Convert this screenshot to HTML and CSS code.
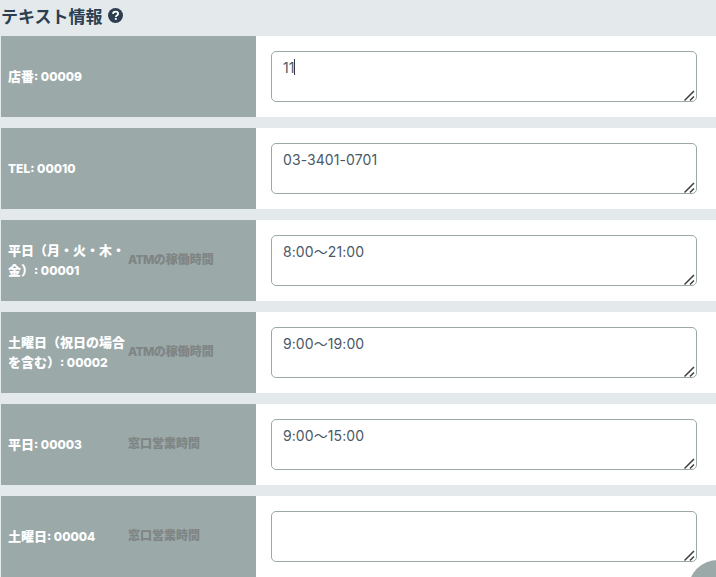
FILE: index.html
```html
<!DOCTYPE html>
<html lang="ja">
<head>
<meta charset="utf-8">
<title>テキスト情報</title>
<link rel="stylesheet" href="styles.css">
</head>
<body>
<main class="panel">
  <h2 class="title">テキスト情報
    <svg class="help" viewBox="0 0 16 16" width="15" height="15" aria-hidden="true"><circle cx="8" cy="8" r="8" fill="#2c3e50"/><path d="M5.3 6.3C5.4 4.7 6.6 3.8 8.1 3.8c1.6 0 2.7.9 2.7 2.2 0 1.1-.7 1.6-1.4 2-.7.4-1 .7-1 1.5" fill="none" stroke="#fff" stroke-width="1.9"/><rect x="7.3" y="10.6" width="2" height="2" fill="#fff"/></svg>
  </h2>
  <div class="rows">
    <section class="row">
      <div class="label"><span class="name">店番<span class="code">: 00009</span></span></div>
      <div class="field"><textarea class="input">11</textarea><i class="caret"></i><svg class="grip" viewBox="0 0 12 12" width="12" height="12" aria-hidden="true"><path d="M.5 10.5 10 1M6 10.5 10 6.5" fill="none" stroke="#3c3c3c" stroke-width="1.5"/></svg></div>
    </section>
    <section class="row">
      <div class="label"><span class="name"><span class="code">TEL: 00010</span></span></div>
      <div class="field"><textarea class="input">03-3401-0701</textarea><svg class="grip" viewBox="0 0 12 12" width="12" height="12" aria-hidden="true"><path d="M.5 10.5 10 1M6 10.5 10 6.5" fill="none" stroke="#3c3c3c" stroke-width="1.5"/></svg></div>
    </section>
    <section class="row">
      <div class="label"><span class="name">平日（月・火・木・金）<span class="code">: 00001</span></span><span class="note"><span class="atm">ATM</span>の稼働時間</span></div>
      <div class="field"><textarea class="input">8:00〜21:00</textarea><svg class="grip" viewBox="0 0 12 12" width="12" height="12" aria-hidden="true"><path d="M.5 10.5 10 1M6 10.5 10 6.5" fill="none" stroke="#3c3c3c" stroke-width="1.5"/></svg></div>
    </section>
    <section class="row">
      <div class="label"><span class="name">土曜日（祝日の場合を含む）<span class="code">: 00002</span></span><span class="note"><span class="atm">ATM</span>の稼働時間</span></div>
      <div class="field"><textarea class="input">9:00〜19:00</textarea><svg class="grip" viewBox="0 0 12 12" width="12" height="12" aria-hidden="true"><path d="M.5 10.5 10 1M6 10.5 10 6.5" fill="none" stroke="#3c3c3c" stroke-width="1.5"/></svg></div>
    </section>
    <section class="row">
      <div class="label"><span class="name">平日<span class="code">: 00003</span></span><span class="note">窓口営業時間</span></div>
      <div class="field"><textarea class="input">9:00〜15:00</textarea><svg class="grip" viewBox="0 0 12 12" width="12" height="12" aria-hidden="true"><path d="M.5 10.5 10 1M6 10.5 10 6.5" fill="none" stroke="#3c3c3c" stroke-width="1.5"/></svg></div>
    </section>
    <section class="row">
      <div class="label"><span class="name">土曜日<span class="code">: 00004</span></span><span class="note">窓口営業時間</span></div>
      <div class="field"><textarea class="input"></textarea><svg class="grip" viewBox="0 0 12 12" width="12" height="12" aria-hidden="true"><path d="M.5 10.5 10 1M6 10.5 10 6.5" fill="none" stroke="#3c3c3c" stroke-width="1.5"/></svg></div>
    </section>
  </div>
</main>
<div class="fab"></div>
</body>
</html>
```
FILE: styles.css
```css
* { box-sizing: border-box; }
html, body { height: 100%; }
body {
  margin: 0;
  background: #e4e9ec;
  overflow: hidden;
  font-family: "Inter", "Noto Sans CJK JP", sans-serif;
  color: #2c3e50;
}
.title {
  display: flex;
  align-items: center;
  gap: 5px;
  height: 36px;
  margin: 0;
  padding: 0 0 6px 1px;
  font-size: 17px;
  font-weight: 700;
  font-family: "Noto Sans CJK JP", sans-serif;
  color: #2c3e50;
}
.help { display: block; }
.rows {
  display: flex;
  flex-direction: column;
  gap: 11px;
}
.row {
  display: grid;
  grid-template-columns: 255px 1fr;
  height: 81px;
  margin-left: 1px;
  background: #fff;
}
.label {
  display: grid;
  grid-template-columns: 120px 1fr;
  align-items: center;
  padding: 0 0 1px 7px;
  background: #9ba9a9;
  font-size: 13px;
  font-weight: 800;
  line-height: 20px;
}
.name { color: #fff; width: 120px; }
.code { font-size: 12px; }
.note { color: #7f8484; font-size: 12px; }
.atm { letter-spacing: -0.6px; }
.field {
  position: relative;
  padding: 15px 19px 0 15px;
}
.input {
  display: block;
  width: 100%;
  height: 51px;
  padding: 7px 11px 0;
  border: 1px solid #9ba9a9;
  border-radius: 5px;
  background: #fff;
  color: #4a5866;
  font-family: "Inter", "Noto Sans CJK JP", sans-serif;
  font-size: 14px;
  line-height: 17px;
  letter-spacing: 0.08px;
  outline: none;
  resize: none;
}
.caret {
  position: absolute;
  left: 38px;
  top: 23px;
  width: 1px;
  height: 16px;
  background: #2c3e50;
}
.grip {
  position: absolute;
  right: 20px;
  top: 54px;
}
.fab {
  position: fixed;
  left: 688px;
  top: 560px;
  width: 60px;
  height: 60px;
  border-radius: 50%;
  background: #9ba9a9;
}
```
